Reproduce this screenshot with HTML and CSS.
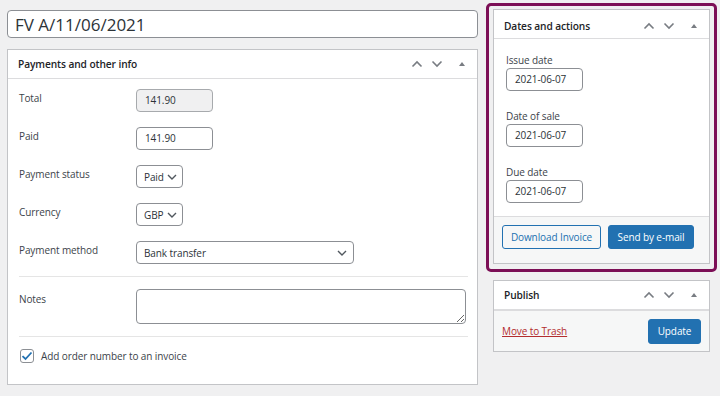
FILE: index.html
```html
<!DOCTYPE html>
<html lang="en">
<head>
  <meta charset="UTF-8">
  <title>Edit invoice</title>
  <link rel="stylesheet" href="styles.css">
</head>
<body>
  <div class="wrap">
    <div class="main-col">
      <input class="title-input" type="text" value="FV A/11/06/2021">

      <div class="postbox">
        <div class="postbox-header">
          <h2>Payments and other info</h2>
          <div class="handles">
            <svg width="12" height="8" viewBox="0 0 12 8"><path d="M1.5 6.5 6 2l4.5 4.5" fill="none" stroke="#787c82" stroke-width="1.6"/></svg>
            <svg width="12" height="8" viewBox="0 0 12 8"><path d="M1.5 1.5 6 6l4.5-4.5" fill="none" stroke="#787c82" stroke-width="1.6"/></svg>
            <svg class="toggle" width="8" height="6" viewBox="0 0 8 6"><path d="M4 1 7 5H1z" fill="#787c82"/></svg>
          </div>
        </div>
        <div class="inside">
          <div class="field-row">
            <label>Total</label>
            <div class="text-field readonly">141.90</div>
          </div>
          <div class="field-row">
            <label>Paid</label>
            <div class="text-field">141.90</div>
          </div>
          <div class="field-row">
            <label>Payment status</label>
            <div class="select small">Paid
              <svg width="10" height="6" viewBox="0 0 10 6"><path d="M1 1l4 4 4-4" fill="none" stroke="#50575e" stroke-width="1.4"/></svg>
            </div>
          </div>
          <div class="field-row">
            <label>Currency</label>
            <div class="select small">GBP
              <svg width="10" height="6" viewBox="0 0 10 6"><path d="M1 1l4 4 4-4" fill="none" stroke="#50575e" stroke-width="1.4"/></svg>
            </div>
          </div>
          <div class="field-row">
            <label>Payment method</label>
            <div class="select wide">Bank transfer
              <svg width="10" height="6" viewBox="0 0 10 6"><path d="M1 1l4 4 4-4" fill="none" stroke="#50575e" stroke-width="1.4"/></svg>
            </div>
          </div>
          <div class="separator"></div>
          <div class="field-row notes-row">
            <label>Notes</label>
            <textarea class="notes"></textarea>
          </div>
          <div class="separator"></div>
          <label class="check-row">
            <span class="checkbox">
              <svg width="12" height="10" viewBox="0 0 12 10"><path d="M1.5 5.2 4.5 8l6-6.5" fill="none" stroke="#2271b1" stroke-width="1.8"/></svg>
            </span>
            Add order number to an invoice
          </label>
        </div>
      </div>
    </div>

    <div class="side-col">
      <div class="highlight">
        <div class="postbox">
          <div class="postbox-header">
            <h2>Dates and actions</h2>
            <div class="handles">
              <svg width="12" height="8" viewBox="0 0 12 8"><path d="M1.5 6.5 6 2l4.5 4.5" fill="none" stroke="#787c82" stroke-width="1.6"/></svg>
              <svg width="12" height="8" viewBox="0 0 12 8"><path d="M1.5 1.5 6 6l4.5-4.5" fill="none" stroke="#787c82" stroke-width="1.6"/></svg>
              <svg class="toggle" width="8" height="6" viewBox="0 0 8 6"><path d="M4 1 7 5H1z" fill="#787c82"/></svg>
            </div>
          </div>
          <div class="inside dates">
            <div class="date-field">
              <label>Issue date</label>
              <div class="text-field date">2021-06-07</div>
            </div>
            <div class="date-field">
              <label>Date of sale</label>
              <div class="text-field date">2021-06-07</div>
            </div>
            <div class="date-field">
              <label>Due date</label>
              <div class="text-field date">2021-06-07</div>
            </div>
          </div>
          <div class="actions">
            <button class="btn btn-secondary">Download Invoice</button>
            <button class="btn btn-primary">Send by e-mail</button>
          </div>
        </div>
      </div>

      <div class="postbox publish">
        <div class="postbox-header">
          <h2>Publish</h2>
          <div class="handles">
            <svg width="12" height="8" viewBox="0 0 12 8"><path d="M1.5 6.5 6 2l4.5 4.5" fill="none" stroke="#787c82" stroke-width="1.6"/></svg>
            <svg width="12" height="8" viewBox="0 0 12 8"><path d="M1.5 1.5 6 6l4.5-4.5" fill="none" stroke="#787c82" stroke-width="1.6"/></svg>
            <svg class="toggle" width="8" height="6" viewBox="0 0 8 6"><path d="M4 1 7 5H1z" fill="#787c82"/></svg>
          </div>
        </div>
        <div class="actions publish-actions">
          <a href="#" class="trash">Move to Trash</a>
          <button class="btn btn-primary">Update</button>
        </div>
      </div>
    </div>
  </div>
</body>
</html>
```

FILE: styles.css
```css
html, body {
  margin: 0;
  height: 100%;
}
body {
  font-family: 'Open Sans', 'Noto Sans', sans-serif;
  font-size: 10px;
  letter-spacing: -0.1px;
  color: #3c434a;
  background: #f0f0f1;
}
.wrap {
  display: flex;
  padding-left: 7px;
  gap: 8px;
}
.main-col {
  width: 471px;
  padding-top: 10px;
}
.side-col {
  width: 231px;
  padding-top: 3px;
}
.title-input {
  display: block;
  box-sizing: border-box;
  width: 100%;
  height: 28px;
  margin: 0 0 11px;
  padding: 0 7px;
  border: 1px solid #8c8f94;
  border-radius: 4px;
  font-family: inherit;
  font-size: 17px;
  color: #2c3338;
  background: #fff;
}
.postbox {
  background: #fff;
  border: 1px solid #c3c4c7;
  box-sizing: border-box;
}
.main-col .postbox {
  height: 336px;
}
.postbox-header {
  display: flex;
  align-items: center;
  justify-content: space-between;
  height: 28px;
  padding: 0 10px;
  border-bottom: 1px solid #dcdcde;
}
.postbox-header h2 {
  margin: 0;
  font-size: 10.2px;
  font-weight: 600;
  color: #1d2327;
}
.handles {
  display: flex;
  align-items: center;
  gap: 8px;
}
.handles .toggle {
  margin-left: 7px;
  margin-right: 1px;
}
.inside {
  padding: 10px 10px 0 11px;
}
.field-row {
  display: flex;
  align-items: flex-start;
  margin-bottom: 15px;
}
.field-row label {
  width: 117px;
  flex-shrink: 0;
  padding-top: 2px;
  color: #3c434a;
}
.text-field {
  box-sizing: border-box;
  width: 77px;
  height: 23px;
  line-height: 21px;
  padding: 0 8px;
  border: 1px solid #8c8f94;
  border-radius: 4px;
  color: #2c3338;
  background: #fff;
}
.text-field.readonly {
  background: #f0f0f1;
  border-color: #a7aaad;
}
.select {
  display: flex;
  align-items: center;
  justify-content: space-between;
  box-sizing: border-box;
  height: 23px;
  padding: 0 6px 0 7px;
  border: 1px solid #8c8f94;
  border-radius: 4px;
  color: #2c3338;
  background: #fff;
  white-space: nowrap;
}
.select.small {
  width: 47px;
  padding-right: 5px;
}
.select.wide {
  width: 218px;
}
.separator {
  height: 1px;
  background: #e5e5e5;
  margin: -3px -1px 12px 0;
}
.notes-row label {
  padding-top: 3px;
}
.notes {
  box-sizing: border-box;
  width: 330px;
  height: 35px;
  margin: 0;
  border: 1px solid #8c8f94;
  border-radius: 4px;
  resize: vertical;
}
.check-row {
  display: flex;
  align-items: center;
  gap: 7px;
  padding-left: 1px;
  color: #3c434a;
}
.checkbox {
  display: flex;
  align-items: center;
  justify-content: center;
  box-sizing: border-box;
  width: 14px;
  height: 14px;
  border: 1px solid #8c8f94;
  border-radius: 3px;
  background: #fff;
}
.highlight {
  border: 3px solid #7c0f56;
  border-radius: 5px;
  padding: 3px 4px 5px 4px;
  margin-bottom: 8px;
  box-sizing: border-box;
  width: 231px;
}
.highlight .postbox {
  height: 255px;
  display: flex;
  flex-direction: column;
}
.highlight .postbox-header {
  height: 29px;
  padding-top: 3px;
  box-sizing: border-box;
}
.inside.dates {
  padding: 14px 12px 0;
  flex: 1;
}
.date-field {
  margin-bottom: 18px;
}
.date-field:last-child {
  margin-bottom: 10px;
}
.date-field label {
  display: block;
  margin-bottom: 1px;
  color: #3c434a;
}
.actions {
  display: flex;
  align-items: center;
  gap: 7px;
  height: 46px;
  padding: 0 8px;
  border-top: 1px solid #dcdcde;
  background: #f6f7f7;
}
.highlight .actions {
  align-items: flex-start;
  box-sizing: border-box;
  height: 47px;
  padding-top: 8px;
}
.btn {
  height: 24px;
  padding: 0;
  border-radius: 3px;
  font-family: inherit;
  font-size: 10px;
  letter-spacing: -0.1px;
  white-space: nowrap;
  cursor: pointer;
}
.btn-secondary {
  width: 99px;
  color: #2271b1;
  border: 1px solid #2271b1;
  background: #f6f7f7;
}
.btn-primary {
  color: #fff;
  border: 1px solid #2271b1;
  background: #2271b1;
}
.highlight .btn-primary {
  width: 86px;
}
.publish {
  width: 217px;
  margin-left: 7px;
}
.publish-actions {
  justify-content: space-between;
  height: 40px;
}
.publish-actions .btn-primary {
  width: 53px;
  height: 25px;
}
.trash {
  color: #b32d2e;
  text-decoration: underline;
}
```
